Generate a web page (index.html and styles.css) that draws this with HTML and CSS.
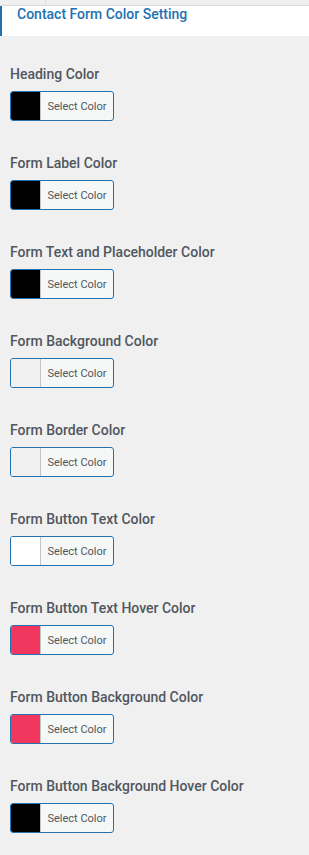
FILE: index.html
```html
<!DOCTYPE html>
<html lang="en">
<head>
  <meta charset="UTF-8" />
  <title>Contact Form Color Setting</title>
  <link rel="stylesheet" href="styles.css">
</head>
<body>

  <div class="top-strip"><span class="tab"></span></div>

  <header class="section-title">
    <h2>Contact Form Color Setting</h2>
  </header>

  <main class="settings">
    <div class="field">
      <label>Heading Color</label>
      <button class="color-btn"><span class="swatch swatch-black"></span><span class="btn-text">Select Color</span></button>
    </div>
    <div class="field">
      <label>Form Label Color</label>
      <button class="color-btn"><span class="swatch swatch-black"></span><span class="btn-text">Select Color</span></button>
    </div>
    <div class="field">
      <label>Form Text and Placeholder Color</label>
      <button class="color-btn"><span class="swatch swatch-black"></span><span class="btn-text">Select Color</span></button>
    </div>
    <div class="field">
      <label>Form Background Color</label>
      <button class="color-btn"><span class="swatch swatch-light"></span><span class="btn-text">Select Color</span></button>
    </div>
    <div class="field">
      <label>Form Border Color</label>
      <button class="color-btn"><span class="swatch swatch-light"></span><span class="btn-text">Select Color</span></button>
    </div>
    <div class="field">
      <label>Form Button Text Color</label>
      <button class="color-btn"><span class="swatch swatch-white"></span><span class="btn-text">Select Color</span></button>
    </div>
    <div class="field">
      <label>Form Button Text Hover Color</label>
      <button class="color-btn"><span class="swatch swatch-pink"></span><span class="btn-text">Select Color</span></button>
    </div>
    <div class="field">
      <label>Form Button Background Color</label>
      <button class="color-btn"><span class="swatch swatch-pink"></span><span class="btn-text">Select Color</span></button>
    </div>
    <div class="field">
      <label>Form Button Background Hover Color</label>
      <button class="color-btn"><span class="swatch swatch-black"></span><span class="btn-text">Select Color</span></button>
    </div>
  </main>

</body>
</html>
```

FILE: styles.css
```css
* { box-sizing: border-box; margin: 0; padding: 0; }

body {
  font-family: Roboto, "Liberation Sans", sans-serif;
  background: #f0f0f1;
  color: #50575e;
  min-height: 100vh;
}

/* cropped tab bar at the very top */
.top-strip {
  height: 6px;
  background: #f0f0f1;
  border-bottom: 1px solid #dcdcde;
}

.top-strip .tab {
  display: block;
  width: 46px;
  height: 5px;
  border-right: 1px solid #dcdcde;
}

.section-title {
  background: #fff;
  border-left: 2px solid #2271b1;
  height: 30px;
  padding: 1px 0 0 15px;
}

.section-title h2 {
  font-size: 14px;
  line-height: 14px;
  font-weight: 500;
  color: #2271b1;
}

.settings {
  padding: 28px 10px 0;
  display: flex;
  flex-direction: column;
  gap: 32px;
}

.field {
  display: flex;
  flex-direction: column;
  align-items: flex-start;
  gap: 7px;
}

.field label {
  font-size: 14px;
  line-height: 20px;
  font-weight: 500;
  color: #50575e;
}

.color-btn {
  display: flex;
  align-items: stretch;
  width: 104px;
  height: 30px;
  border: 1px solid #2271b1;
  border-radius: 3px;
  background: #f6f7f7;
  overflow: hidden;
  cursor: pointer;
  font-family: inherit;
}

.swatch {
  width: 30px;
  border-right: 1px solid #c3c4c7;
}

.swatch-black { background: #000; }
.swatch-light { background: #f0f0f1; }
.swatch-white { background: #fff; }
.swatch-pink { background: #f2375f; }

.btn-text {
  flex: 1;
  display: flex;
  align-items: center;
  justify-content: center;
  font-size: 11px;
  color: #50575e;
}
```
